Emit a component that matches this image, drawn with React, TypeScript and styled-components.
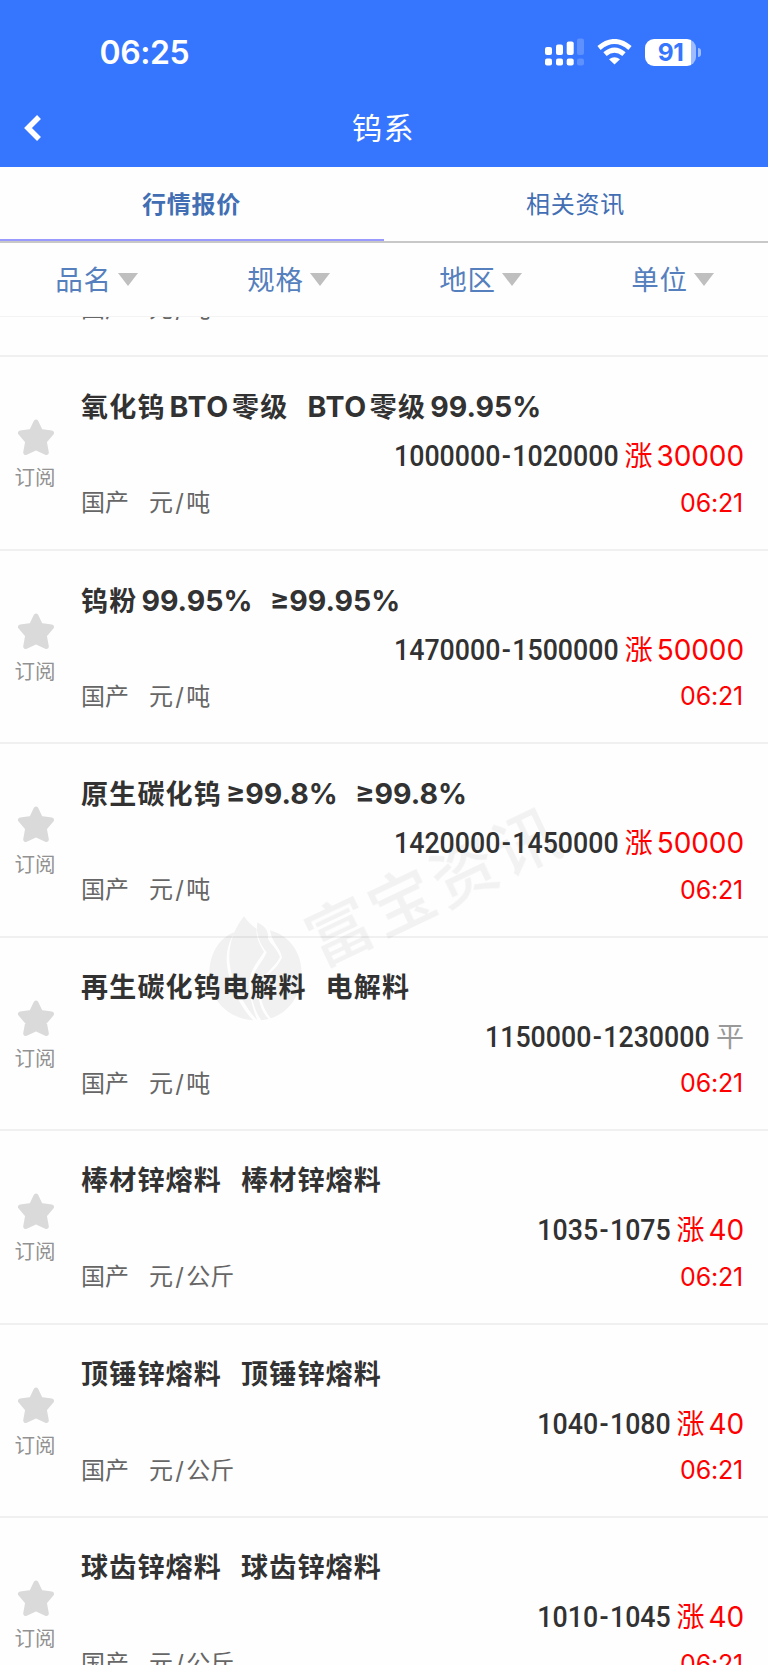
import React from 'react';
import styled, { createGlobalStyle } from 'styled-components';

const Global = createGlobalStyle`
  * { box-sizing: border-box; }
  html, body { margin: 0; padding: 0; background: #fff; }
  body { overflow: hidden; }
`;

const Screen = styled.div`
  position: relative;
  display: flex;
  flex-direction: column;
  width: 768px;
  height: 1665px;
  overflow: hidden;
  background: #fefefe;
  font-family: Inter, 'Noto Sans CJK SC', sans-serif;
  font-weight: 400;
  white-space: nowrap;
`;

const Header = styled.header`
  flex: none;
  height: 167px;
  background: #3675fe;
  color: #fff;
`;

const StatusBar = styled.div`
  display: flex;
  justify-content: space-between;
  align-items: center;
  height: 104px;
  padding: 0 67px 0 99.5px;
`;

const Clock = styled.span`
  padding-top: 1px;
  font-size: 32px;
  font-weight: 600;
  letter-spacing: -0.4px;
`;

const StatusIcons = styled.div`
  display: flex;
  align-items: center;
`;

const NavBar = styled.div`
  display: grid;
  grid-template-columns: 80px 1fr 80px;
  align-items: center;
  height: 47px;
  padding-left: 23px;
  padding-right: 24px;
`;

const NavTitle = styled.h1`
  margin: 0;
  padding-top: 1px;
  text-align: center;
  font-size: 30px;
  line-height: 44px;
  font-weight: 400;
  letter-spacing: 1.6px;
`;

const Tabs = styled.nav`
  flex: none;
  display: flex;
  height: 76px;
  border-bottom: 2px solid #c8c8c8;
`;

const Tab = styled.div<{ $active?: boolean }>`
  flex: 1;
  display: flex;
  align-items: center;
  justify-content: center;
  padding-right: 1px;
  padding-bottom: ${(p) => (p.$active ? '1px' : '3px')};
  border-bottom: ${(p) => (p.$active ? '2px solid #9a99fd' : '0')};
  color: #426eb4;
  font-size: 24px;
  font-weight: ${(p) => (p.$active ? 700 : 400)};
  letter-spacing: 0.8px;
`;

const Filters = styled.div`
  flex: none;
  display: flex;
  height: 74px;
  border-bottom: 1.5px solid #f3f3f3;
`;

const Filter = styled.div`
  flex: 1;
  display: flex;
  align-items: center;
  justify-content: center;
  gap: 6px;
  padding-left: 1px;
  color: #557fbd;
  font-size: 27.5px;
  line-height: 40px;
  letter-spacing: 0.8px;
`;

const Caret = styled.i`
  width: 0;
  height: 0;
  border: 10px solid transparent;
  border-top: 13px solid #c0bfc0;
  border-bottom: 0;
`;

const List = styled.main`
  flex: 1;
  overflow: hidden;
  display: flex;
  flex-direction: column;
  justify-content: flex-start;
`;

const Row = styled.article<{ $scrolled?: boolean }>`
  flex: none;
  display: flex;
  height: ${(p) => (p.$scrolled ? '194.45px' : '193.45px')};
  margin-top: ${(p) => (p.$scrolled ? '-154px' : '0')};
  padding-right: 24px;
  border-bottom: 2px solid #f0f0f0;
`;

const Subscribe = styled.div`
  flex: none;
  display: flex;
  flex-direction: column;
  align-items: center;
  width: 71px;
  padding-top: 62px;
  color: #929292;
  font-size: 20.5px;
  line-height: 28px;
`;

const Label = styled.span`
  margin: 8px 1px 0 0;
`;

const Body = styled.div`
  flex: 1;
  display: flex;
  flex-direction: column;
  padding: 31px 0 0 10px;
`;

const Title = styled.h2`
  display: flex;
  align-items: baseline;
  margin: 0;
  height: 38px;
  line-height: 38px;
  color: #323232;
  font-size: 27px;
  font-weight: 700;
  letter-spacing: 1.2px;
`;

const Han = styled.span``;

const Latin = styled.span<{ $first?: boolean; $last?: boolean; $word?: boolean }>`
  margin-left: ${(p) => (p.$first ? '0' : '4px')};
  margin-right: ${(p) => (p.$last ? '-1.5px' : '3px')};
  font-size: 28.5px;
  font-weight: 700;
  letter-spacing: ${(p) => (p.$word ? '0.7px' : '0')};
`;

const Gap = styled.span`
  width: 19px;
`;

const PriceLine = styled.div`
  display: flex;
  justify-content: flex-end;
  align-items: baseline;
  height: 40px;
  margin-top: 10px;
  line-height: 40px;
`;

const Price = styled.span`
  color: #323232;
  font-family: Roboto, sans-serif;
  font-size: 29px;
  font-weight: 500;
  transform: scaleX(0.922);
  transform-origin: 100% 50%;
`;

const Dash = styled.span`
  margin: 0 1.5px;
`;

const Change = styled.span<{ $flat?: boolean }>`
  display: flex;
  align-items: baseline;
  gap: 4px;
  margin-left: 6px;
  color: ${(p) => (p.$flat ? '#999' : '#fe0000')};
  font-size: 28px;
`;

const Delta = styled.span`
  letter-spacing: -0.1px;
`;

const MetaLine = styled.div`
  display: flex;
  justify-content: space-between;
  align-items: center;
  height: 36px;
  margin-top: 8px;
  line-height: 36px;
`;

const Meta = styled.span`
  display: flex;
  gap: 20px;
  margin-top: 2px;
  color: #666;
  font-size: 24px;
`;

const Slash = styled.span`
  margin: 0 2.3px;
`;

const Time = styled.span`
  margin: 1px 1px 0 0;
  color: #fe0000;
  font-size: 25px;
  letter-spacing: -0.2px;
`;

const Watermark = styled.div`
  position: absolute;
  left: 200px;
  top: 905px;
  display: flex;
  align-items: center;
  pointer-events: none;
  mix-blend-mode: multiply;
`;

const WatermarkText = styled.div`
  position: absolute;
  left: 107px;
  top: -10px;
  color: #f3f3f3;
  font-size: 65px;
  font-weight: 500;
  line-height: 72px;
  letter-spacing: 4px;
  transform: rotate(-25.5deg);
  transform-origin: 35px 36px;
`;

const Signal = () => (
  <svg width="39" height="28" viewBox="0 0 39 28" fill="#fff">
    <rect x="0" y="9" width="7" height="8" rx="2" />
    <rect x="11" y="6.500" width="7" height="10.500" rx="2" />
    <rect x="21.700" y="3.500" width="7" height="13.500" rx="2" />
    <rect x="32" y="0.500" width="7" height="16.500" rx="2" opacity="0.200" />
    <rect x="0" y="20.500" width="7" height="7" rx="2" />
    <rect x="11" y="20.500" width="7" height="7" rx="2" />
    <rect x="21.700" y="20.500" width="7" height="7" rx="2" />
    <rect x="32" y="20.500" width="7" height="7" rx="2" opacity="0.200" />
  </svg>
);

const WifiShape = styled.svg`
  margin: 0 13px 0 13px;
`;

const Wifi = () => (
  <WifiShape width="35" height="26" viewBox="0 0 35 26" fill="none" stroke="#fff" strokeWidth="5">
    <path d="M2 9 Q17.500 -4 33 9" />
    <path d="M8 15.200 Q17.500 7 27 15.200" />
    <path d="M12 20.300 Q17.500 16 23 20.300 L17.500 25.500Z" fill="#fff" stroke="none" />
  </WifiShape>
);

const BatteryBox = styled.div`
  display: flex;
  align-items: center;
`;

const BatteryBody = styled.div`
  width: 51px;
  height: 27px;
  border-radius: 9px;
  background: linear-gradient(90deg, #fff 46px, #9ebcff 46px);
  color: #3675fe;
  text-align: center;
  font-size: 24.5px;
  line-height: 27px;
  font-weight: 700;
  letter-spacing: -0.5px;
`;

const BatteryTip = styled.i`
  width: 3px;
  height: 9px;
  margin-left: 2px;
  border-radius: 0 4px 4px 0;
  background: #9ebcff;
`;

const Star = () => (
  <svg width="38" height="37" viewBox="0 0 38 37">
    <path
      d="M19 3 L23.500 12.500 L34.500 14 L27.300 22.500 L29.300 33.500 L19 28.700 L8.700 33.500 L10.700 22.500 L3.500 14 L14.500 12.500Z"
      fill="#dadada"
      stroke="#dadada"
      strokeWidth="5"
      strokeLinejoin="round"
    />
  </svg>
);

const FlameLogo = () => (
  <svg width="120" height="125" viewBox="0 0 360 375" fill="#f2f2f2">
    <path d="M106 80 C50 100 28 155 28 208 C28 285 85 342 160 346 C125 310 85 240 80 170 C79 135 88 105 106 80Z" />
    <path d="M132 34 C102 72 86 115 88 165 C92 225 126 295 172 346 C158 310 148 275 148 235 C150 190 178 165 192 140 C172 110 168 85 170 72 C155 62 143 50 132 34Z" />
    <path d="M172 52 C198 66 206 80 204 100 C210 118 230 128 240 156 C222 192 190 205 176 242 C170 280 184 320 206 342 L184 346 C162 315 152 275 153 238 C159 195 186 175 200 142 C182 120 166 90 172 52Z" />
    <path d="M210 76 C270 92 306 145 305 208 C304 270 265 325 212 340 C190 312 178 280 182 244 C194 208 228 198 246 158 C240 125 216 115 210 76Z" />
  </svg>
);

const Mixed = ({ text }: { text: string }) => (
  <>
    {text
      .split(/([\x20-\x7e≥]+)/)
      .filter(Boolean)
      .map((part, i, parts) =>
        /[\x20-\x7e≥]/.test(part) ? (
          <Latin key={i} $first={i === 0} $last={i === parts.length - 1} $word={/[A-Z]/.test(part)}>
            {part}
          </Latin>
        ) : (
          <Han key={i}>{part}</Han>
        ),
      )}
  </>
);

interface Quote {
  name: string;
  spec: string;
  price: [string, string];
  change?: string;
  unit: string;
}

const quotes: Quote[] = [
  { name: '氧化钨BTO零级', spec: 'BTO零级99.95%', price: ['1000000', '1020000'], change: '30000', unit: '吨' },
  { name: '钨粉99.95%', spec: '≥99.95%', price: ['1470000', '1500000'], change: '50000', unit: '吨' },
  { name: '原生碳化钨≥99.8%', spec: '≥99.8%', price: ['1420000', '1450000'], change: '50000', unit: '吨' },
  { name: '再生碳化钨电解料', spec: '电解料', price: ['1150000', '1230000'], unit: '吨' },
  { name: '棒材锌熔料', spec: '棒材锌熔料', price: ['1035', '1075'], change: '40', unit: '公斤' },
  { name: '顶锤锌熔料', spec: '顶锤锌熔料', price: ['1040', '1080'], change: '40', unit: '公斤' },
  { name: '球齿锌熔料', spec: '球齿锌熔料', price: ['1010', '1045'], change: '40', unit: '公斤' },
];

const Origin = ({ unit }: { unit: string }) => (
  <Meta>
    <span>国产</span>
    <span>
      元<Slash>/</Slash>
      {unit}
    </span>
  </Meta>
);

const QuoteRow = ({ quote }: { quote: Quote }) => (
  <Row>
    <Subscribe>
      <Star />
      <Label>订阅</Label>
    </Subscribe>
    <Body>
      <Title>
        <Mixed text={quote.name} />
        <Gap />
        <Mixed text={quote.spec} />
      </Title>
      <PriceLine>
        <Price>
          {quote.price[0]}
          <Dash>-</Dash>
          {quote.price[1]}
        </Price>
        <Change $flat={!quote.change}>
          {quote.change ? (
            <>
              <span>涨</span>
              <Delta>{quote.change}</Delta>
            </>
          ) : (
            <span>平</span>
          )}
        </Change>
      </PriceLine>
      <MetaLine>
        <Origin unit={quote.unit} />
        <Time>06:21</Time>
      </MetaLine>
    </Body>
  </Row>
);

export default function App() {
  return (
    <Screen>
      <Global />
      <Header>
        <StatusBar>
          <Clock>06:25</Clock>
          <StatusIcons>
            <Signal />
            <Wifi />
            <BatteryBox>
              <BatteryBody>91</BatteryBody>
              <BatteryTip />
            </BatteryBox>
          </StatusIcons>
        </StatusBar>
        <NavBar>
          <svg width="19" height="28" viewBox="0 0 19 28" fill="none" stroke="#fff" strokeWidth="5.500">
            <path d="M16 3 L5 14 L16 25" />
          </svg>
          <NavTitle>钨系</NavTitle>
        </NavBar>
      </Header>
      <Tabs>
        <Tab $active>行情报价</Tab>
        <Tab>相关资讯</Tab>
      </Tabs>
      <Filters>
        {['品名', '规格', '地区', '单位'].map((name) => (
          <Filter key={name}>
            <span>{name}</span>
            <Caret />
          </Filter>
        ))}
      </Filters>
      <List>
        <Row $scrolled>
          <Subscribe />
          <Body>
            <Title />
            <PriceLine />
            <MetaLine>
              <Origin unit="吨" />
            </MetaLine>
          </Body>
        </Row>
        {quotes.map((quote) => (
          <QuoteRow key={quote.name} quote={quote} />
        ))}
      </List>
      <Watermark>
        <FlameLogo />
        <WatermarkText>富宝资讯</WatermarkText>
      </Watermark>
    </Screen>
  );
}
